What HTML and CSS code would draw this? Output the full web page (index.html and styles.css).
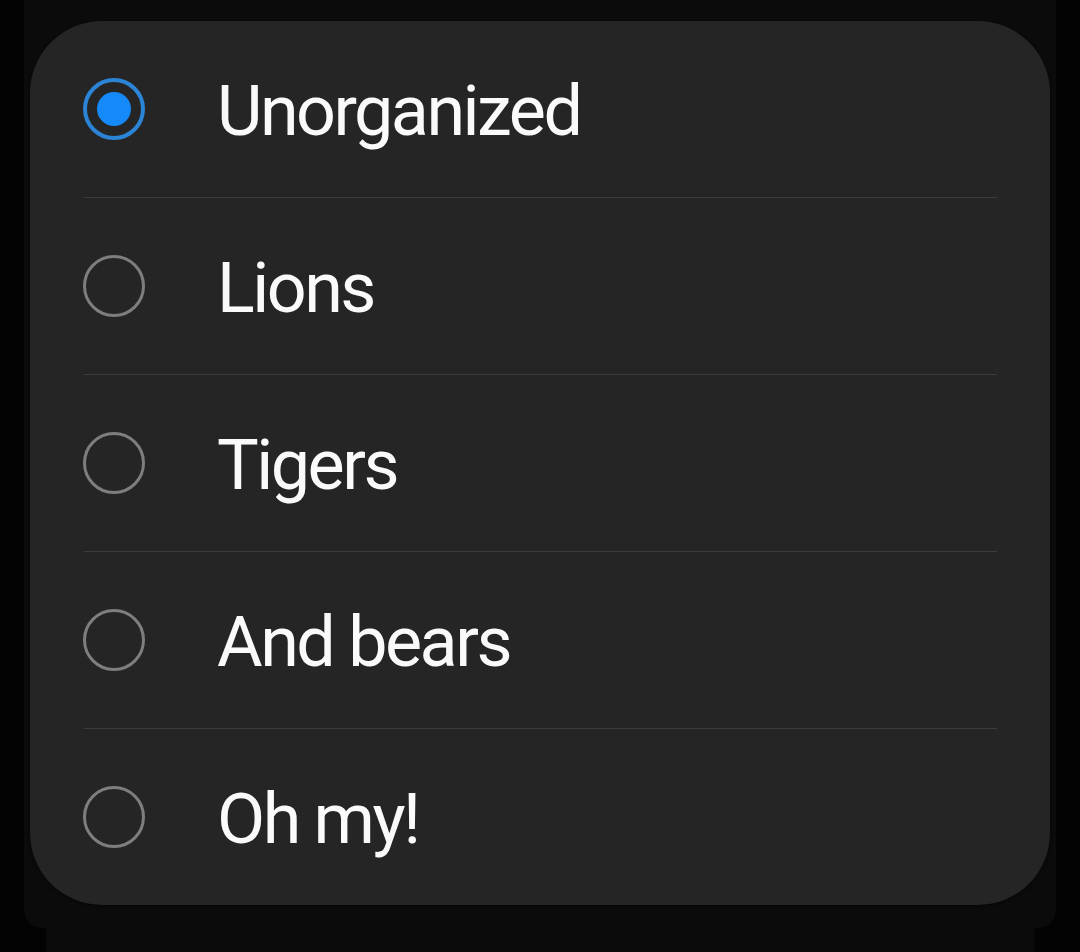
FILE: index.html
```html
<!DOCTYPE html>
<html lang="en">
<head>
<meta charset="utf-8">
<title>Choose a category</title>
<link rel="stylesheet" href="styles.css">
</head>
<body>
<div class="screen">
  <div class="panel">
    <div class="card" role="radiogroup">
      <div class="row" role="radio" aria-checked="true">
        <span class="radio radio-on"><span class="dot"></span></span>
        <span class="label">Unorganized</span>
      </div>
      <div class="row" role="radio" aria-checked="false">
        <span class="radio"></span>
        <span class="label">Lions</span>
      </div>
      <div class="row" role="radio" aria-checked="false">
        <span class="radio"></span>
        <span class="label">Tigers</span>
      </div>
      <div class="row" role="radio" aria-checked="false">
        <span class="radio"></span>
        <span class="label">And bears</span>
      </div>
      <div class="row" role="radio" aria-checked="false">
        <span class="radio"></span>
        <span class="label">Oh my!</span>
      </div>
    </div>
  </div>
  <div class="under"></div>
</div>
</body>
</html>
```

FILE: styles.css
```css
html, body {
  margin: 0;
  padding: 0;
  background: #000;
}

.screen {
  width: 1080px;
  height: 952px;
  display: flex;
  flex-direction: column;
  overflow: hidden;
  background: #030303;
}

.panel {
  margin: 0 24px;
  padding: 21px 6px 23px;
  background: #0b0b0b;
  border-radius: 0 0 18px 18px;
}

.under {
  margin: 0 45px 0 46px;
  flex: 1;
  background: #0a0a0a;
}

.card {
  height: 884px;
  background: #252525;
  border-radius: 72px;
  padding: 0 53px 0 54px;
  box-sizing: border-box;
  display: flex;
  flex-direction: column;
  box-shadow: 0 1px 3px rgba(0, 0, 0, 0.6);
  font-family: Roboto, "Noto Sans", sans-serif;
}

.row {
  height: 176px;
  display: flex;
  align-items: center;
  gap: 72px;
  border-bottom: 1px solid #3c3c3c;
}

.row:last-child {
  border-bottom: none;
}

.radio {
  flex: none;
  width: 62px;
  height: 62px;
  box-sizing: border-box;
  border-radius: 50%;
  border: 3px solid #7e7e7e;
  display: flex;
  align-items: center;
  justify-content: center;
  margin-left: -1px;
}

.radio-on {
  border: 4px solid #2c84d6;
}

.dot {
  width: 34px;
  height: 34px;
  border-radius: 50%;
  background: #1589f8;
}

.label {
  color: #fafafa;
  font-size: 70px;
  line-height: 1;
  letter-spacing: -2.5px;
  position: relative;
  top: 2px;
}
```
